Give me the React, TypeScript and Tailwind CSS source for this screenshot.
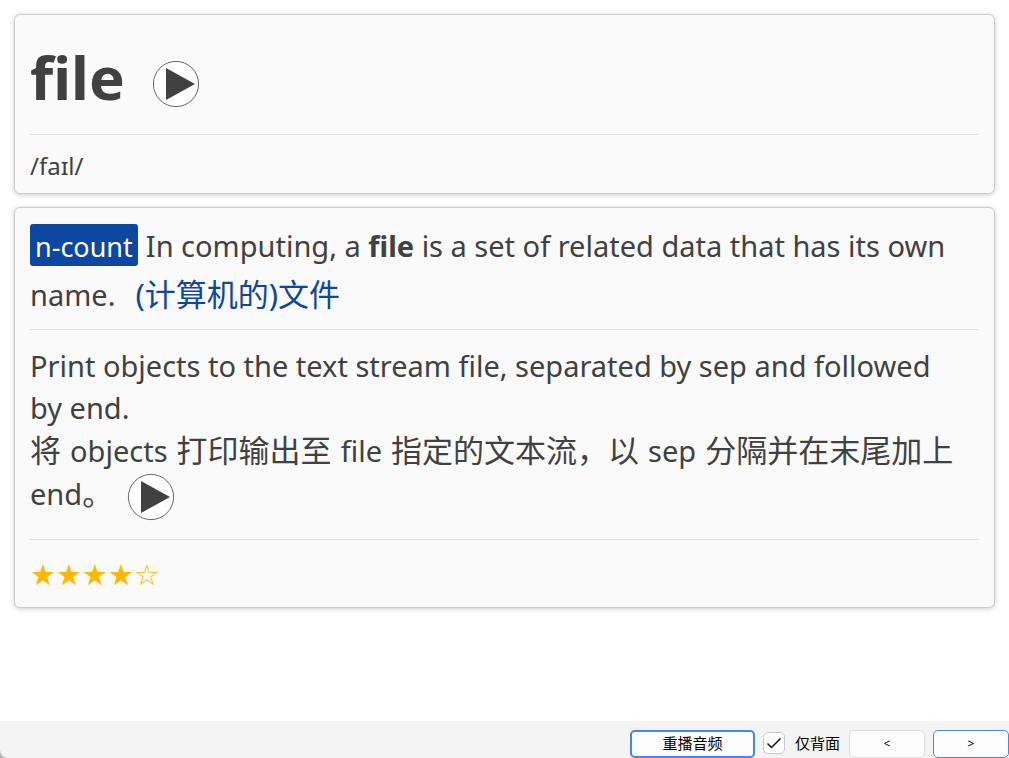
import { useState, type ReactNode } from "react";

function PlayButton({ label, className = "" }: { label: string; className?: string }) {
  return (
    <button type="button" aria-label={label} className={`inline-block ${className}`}>
      <svg viewBox="0 0 48 48" className="block size-12">
        <circle cx="24" cy="24" r="22.6" fill="#fff" stroke="#414141" strokeWidth="0.8" />
        <path d="M14 8 L43 24 L14 40 Z" fill="#414141" />
      </svg>
    </button>
  );
}

function Latin({ children }: { children: ReactNode }) {
  return <span className="mx-px text-[29px]">{children}</span>;
}

const card =
  "rounded-md border border-[#cccccc] bg-[#fafafa] px-[15px] shadow-[0_1px_5px_rgba(0,0,0,0.2)]";

export default function App() {
  const [backOnly, setBackOnly] = useState(true);

  return (
    <div className="flex min-h-screen flex-col bg-white font-['Noto_Sans','Noto_Sans_CJK_SC',sans-serif] text-[#414141]">
      <main className="flex flex-1 flex-col gap-[13px] p-3.5">
        <section className={`${card} pb-2`}>
          <header className="flex h-[120px] items-center gap-[27px] border-b border-[#e2e2e2]">
            <h1 className="pt-1 text-[60px] leading-[80px] font-bold">file</h1>
            <PlayButton label="Play pronunciation" className="mt-[18px]" />
          </header>
          <p className="pt-3 text-2xl leading-[38px]">/faɪl/</p>
        </section>

        <section className={`${card} text-[29px] leading-[42px]`}>
          <p className="border-b border-[#e2e2e2] pt-3.5 pb-2.5 leading-[48px]">
            <span className="mr-2 inline-block rounded-[3px] bg-[#0d47a1] px-[5px] pt-1 text-[27px] leading-[38px] text-white">
              n-count
            </span>
            In computing, a <b>file</b> is a set of related data that has its own name.
            <span className="ml-5 text-[31px] text-[#0d47a1]">(计算机的)文件</span>
          </p>
          <div className="border-b border-[#e2e2e2] pt-[15px] pb-[18px]">
            <p>Print objects to the text stream file, separated by sep and followed by{"\u00a0"}end.</p>
            <p className="text-[31px]">
              将 <Latin>objects</Latin> 打印输出至 <Latin>file</Latin> 指定的文本流，以{" "}
              <Latin>sep</Latin> 分隔并在末尾加上 <span className="text-[29px]">end</span>。
              <PlayButton label="Play example" className="ml-3.5 align-middle" />
            </p>
          </div>
          <p
            role="img"
            aria-label="4 out of 5 stars"
            className="pt-3.5 pb-[11px] font-['DejaVu_Sans',sans-serif] text-[29px] text-[#ffb800]"
          >
            ★★★★☆
          </p>
        </section>
      </main>

      <div className="bg-[#b8b8b8]">
        <footer className="flex h-[37px] items-center justify-end rounded-bl-lg bg-[#f4f4f4] pt-2 text-[15px] leading-5 text-black">
          <button
            type="button"
            className="h-7 w-[125px] rounded-[5px] border-2 border-[#3f87f5] bg-[#fdfdfd] pb-0.5"
          >
            重播音频
          </button>
          <label className="ml-2 flex items-center gap-2.5 pb-0.5">
            <span className="grid size-[22px] place-items-center">
              <input
                type="checkbox"
                checked={backOnly}
                onChange={(e) => setBackOnly(e.target.checked)}
                className="peer col-start-1 row-start-1 size-[22px] appearance-none rounded-[5px] border border-[#c8c8c8] bg-white"
              />
              <svg
                viewBox="0 0 16 16"
                className="pointer-events-none col-start-1 row-start-1 hidden size-4 peer-checked:block"
                fill="none"
                stroke="#111"
                strokeWidth="1.5"
              >
                <path d="M1.5 8.5 L5.5 12.5 L14.5 3.5" />
              </svg>
            </span>
            仅背面
          </label>
          <button
            type="button"
            aria-label="Previous"
            className="ml-[9px] h-7 w-19 rounded-[5px] border border-[#dddddd] bg-[#fdfdfd] text-xs"
          >
            &lt;
          </button>
          <button
            type="button"
            aria-label="Next"
            className="ml-2 h-7 w-19 rounded-[5px] border border-[#3f87f5] bg-[#fdfdfd] text-xs"
          >
            &gt;
          </button>
        </footer>
      </div>
    </div>
  );
}
